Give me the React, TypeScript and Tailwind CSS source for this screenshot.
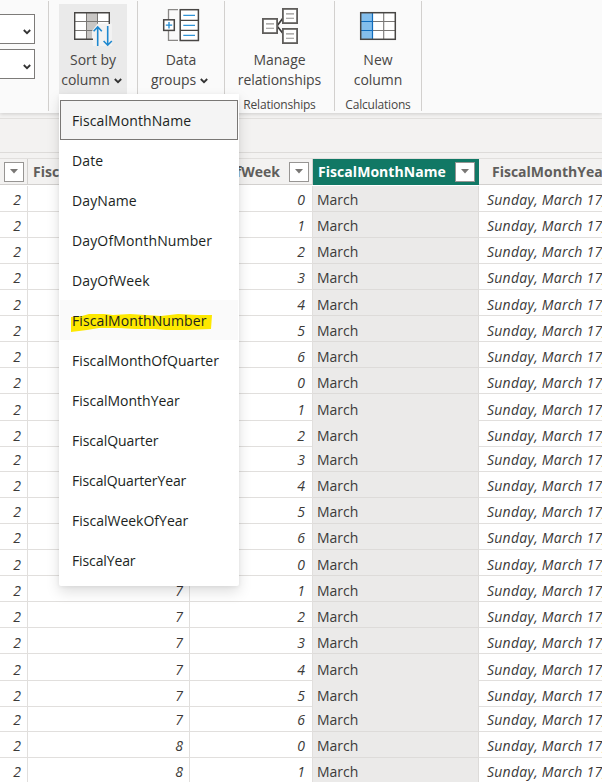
import React from "react";

const MENU_ITEMS = [
  { label: "FiscalMonthName", tracking: "tracking-[0.1px]" },
  { label: "Date", tracking: "tracking-[0.1px]" },
  { label: "DayName", tracking: "tracking-[0.1px]" },
  { label: "DayOfMonthNumber", tracking: "tracking-[0.14px]" },
  { label: "DayOfWeek", tracking: "tracking-[0.14px]" },
  { label: "FiscalMonthNumber", tracking: "tracking-[0.1px]" },
  { label: "FiscalMonthOfQuarter", tracking: "tracking-[0.06px]" },
  { label: "FiscalMonthYear", tracking: "tracking-[0px]" },
  { label: "FiscalQuarter", tracking: "tracking-[-0.04px]" },
  { label: "FiscalQuarterYear", tracking: "tracking-[-0.12px]" },
  { label: "FiscalWeekOfYear", tracking: "tracking-[0px]" },
  { label: "FiscalYear", tracking: "tracking-[-0.12px]" },
];

const ROWS = Array.from({ length: 23 }, (_, i) => ({
  quarter: 2,
  week: i < 21 ? 7 : 8,
  day: i % 7,
  month: "March",
  date: "Sunday, March 17,",
}));

// The grid's text baseline drifts down by a pixel every few rows and resets each ten.
const OFFSETS = ["pt-[4px]", "pt-[4px]", "pt-[4px]", "pt-[4px]", "pt-[5px]", "pt-[5px]", "pt-[5px]", "pt-[5px]", "pt-[6px]", "pt-[6px]"];

function Chevron({ className = "" }: { className?: string }) {
  return (
    <svg className={className} width="8" height="6" viewBox="0 0 8 6" fill="none" stroke="#333" strokeWidth="1.8">
      <path d="M0.8 1 L4 4.2 L7.2 1" />
    </svg>
  );
}

function SelectBox() {
  return (
    <div className="flex h-[30px] w-[35px] items-center justify-end border border-l-0 border-[#7d7b79] bg-white pt-[6px] pr-[3px]">
      <Chevron />
    </div>
  );
}

function SortIcon() {
  return (
    <svg width="40" height="38" viewBox="74 10 40 38" fill="none">
      <rect x="76" y="13" width="34" height="26" fill="#fff" />
      <rect x="87" y="13" width="12" height="26" fill="#c8c6c4" />
      <path d="M76 21.5H110M76 30.5H110M87.5 13V39M98.5 13V39" stroke="#797775" />
      <path d="M93 40V31L98.7 23.5H113V46H94z" fill="#f2f2f2" />
      <path d="M94 39.3H75.7V12.7H110.3V24" stroke="#484644" strokeWidth="1.4" />
      <path d="M98.7 46V27M94.6 31.2L98.7 27L102.8 31.2M108.7 26V45M104.6 41L108.7 45.2L112.8 41" stroke="#1e88cf" strokeWidth="1.6" />
    </svg>
  );
}

function GroupsIcon() {
  return (
    <svg width="40" height="38" viewBox="161 8 40 38" fill="none">
      <path d="M178 9.7H168.5V40.3H178" stroke="#8a8886" strokeWidth="1.3" />
      <rect x="180.2" y="9.7" width="18.2" height="30.8" fill="#fff" stroke="#484644" strokeWidth="1.5" />
      <path d="M180 20.4H198.5M180 30.4H198.5" stroke="#484644" strokeWidth="1.4" />
      <path d="M183.3 15.3H195M183.3 25.3H195M183.3 35.3H195" stroke="#2f93d6" strokeWidth="1.2" />
      <rect x="163.7" y="19.8" width="10.6" height="10.6" fill="#fff" stroke="#484644" strokeWidth="1.5" />
      <path d="M165.8 25.2H172.2M169 22V28.4" stroke="#1e88cf" strokeWidth="1.3" />
    </svg>
  );
}

function RelationIcon() {
  return (
    <svg width="40" height="38" viewBox="260 7 40 38" fill="none">
      <path d="M283 18L277 26L283 33.5" stroke="#3b3a39" strokeWidth="1.7" />
      <g fill="#fff" stroke="#605e5c" strokeWidth="1.8">
        <rect x="262.9" y="18.9" width="14.2" height="14.2" />
        <rect x="282.9" y="8.9" width="14.2" height="14.2" />
        <rect x="282.9" y="28.9" width="14.2" height="14.2" />
      </g>
      <path d="M266 23.9H274M266 28.2H274M286 13.9H294M286 18.2H294M286 33.9H294M286 38.2H294" stroke="#979593" strokeWidth="1.1" />
    </svg>
  );
}

function ColumnIcon() {
  return (
    <svg width="40" height="38" viewBox="358 10 40 38" fill="none">
      <rect x="361" y="13" width="34" height="26" fill="#fff" />
      <rect x="361" y="13" width="12" height="26" fill="#83beec" />
      <path d="M373 21.5H395M373 30.5H395M383.7 13V39" stroke="#797775" strokeWidth="1.1" />
      <path d="M361 21.5H373M361 30.5H373M372.5 13V39" stroke="#0f6cbd" strokeWidth="1.2" />
      <rect x="360.7" y="12.7" width="34.6" height="26.6" stroke="#484644" strokeWidth="1.5" />
    </svg>
  );
}

function Divider() {
  return <div className="mt-px h-[110px] w-px shrink-0 bg-[#d2d0ce]" />;
}

function RibbonButton({ icon, top, bottom, chevron, label }: { icon: React.ReactNode; top: string; bottom: string; chevron?: boolean; label?: string }) {
  return (
    <div className="flex flex-col items-center text-[14px] leading-5 whitespace-nowrap text-[#484644]">
      {icon}
      <span>{top}</span>
      <span className="flex items-center tracking-[-0.08px]">
        {bottom}
        {chevron && <Chevron className="mt-[1px] mr-[3px] ml-1" />}
      </span>
      {label && <span className="mt-[5px] text-[12px] tracking-[-0.2px]">{label}</span>}
    </div>
  );
}

function FilterButton() {
  return (
    <span className="flex h-5 w-5 shrink-0 items-center justify-center border border-[#979593] bg-white">
      <svg width="8" height="5" viewBox="0 0 8 5">
        <path d="M0 0H8L4 4.5z" fill="#797775" />
      </svg>
    </span>
  );
}

const COLUMNS = "grid grid-cols-[28px_162px_123px_166px_123px]";

export default function App() {
  return (
    <div className="relative flex h-[782px] w-[602px] flex-col overflow-hidden bg-white font-['Open_Sans','Noto_Sans',sans-serif] font-normal text-[#3b3a39]">
      <div className="z-10 flex h-[113px] shrink-0 bg-[#fafafa] shadow-[0_1px_4px_rgba(0,0,0,0.16)]">
        <div className="flex w-12 flex-col gap-[5px] pt-[14px]">
          <SelectBox />
          <SelectBox />
        </div>
        <Divider />
        <div className="mt-1 ml-[10px] h-[90px] w-[68px] bg-[#eaeaea] pt-[6px]">
          <RibbonButton icon={<div className="h-10"><SortIcon /></div>} top="Sort by" bottom="column" chevron />
        </div>
        <div className="w-[10px]" />
        <Divider />
        <div className="w-[86px] pt-2">
          <RibbonButton icon={<div className="h-[42px]"><GroupsIcon /></div>} top="Data" bottom="groups" chevron />
        </div>
        <Divider />
        <div className="w-[109px] pt-[7px]">
          <RibbonButton icon={<div className="h-[43px]"><RelationIcon /></div>} top="Manage" bottom="relationships" label="Relationships" />
        </div>
        <Divider />
        <div className="w-[86px] pt-[10px]">
          <RibbonButton icon={<div className="h-10"><ColumnIcon /></div>} top="New" bottom="column" label="Calculations" />
        </div>
        <Divider />
      </div>

      <div className="h-[40px] shrink-0 border-b border-[#dddbd9] bg-[#f3f2f1] pt-[5px]">
        <div className="h-px bg-[#e1dfdd]" />
      </div>
      <div className="h-[6px] shrink-0 border-b border-[#e1dfdd] bg-[#f3f2f1]" />

      <div className={`${COLUMNS} h-[26px] shrink-0 bg-[#f3f2f1] text-[14px] font-bold whitespace-nowrap text-[#605e5c]`}>
        <div className="flex items-center justify-end border-r border-b border-[#d2d0ce] pr-[3px]"><FilterButton /></div>
        <div className="flex items-center overflow-hidden border-r border-b border-[#d2d0ce] pl-[5px]">FiscalWeekOfYear</div>
        <div className="flex items-center justify-end gap-[9px] border-r border-b border-[#d2d0ce] pr-[3px]">DayOfWeek<FilterButton /></div>
        <div className="flex items-center justify-between border-b border-[#117865] bg-[#117865] pr-1 pl-[5px] tracking-[0.05px] text-white">FiscalMonthName<FilterButton /></div>
        <div className="flex items-center overflow-hidden border-b border-[#d2d0ce] pl-[13px]">FiscalMonthYear</div>
      </div>

      <div className="text-[14px] leading-5 whitespace-nowrap">
        {ROWS.map((row, i) => (
          <div key={i} className={`${COLUMNS} h-[26px] ${i === 0 ? "mt-[1px]" : ""}`}>
            <div className={`border-r border-b border-[#e1dfdd] pr-[6px] text-right italic ${OFFSETS[i % 10]}`}>{row.quarter}</div>
            <div className={`border-r border-b border-[#e1dfdd] pr-[6px] text-right italic ${OFFSETS[i % 10]}`}>{row.week}</div>
            <div className={`border-r border-b border-[#e1dfdd] pr-[7px] text-right italic ${OFFSETS[i % 10]}`}>{row.day}</div>
            <div className={`border-r border-b border-[#dddbd9] bg-[#ebeae9] pl-1 ${OFFSETS[i % 10]}`}>{row.month}</div>
            <div className={`overflow-hidden border-b border-[#e1dfdd] pl-2 tracking-[0.25px] italic ${OFFSETS[i % 10]}`}>{row.date}</div>
          </div>
        ))}
      </div>

      <div className="absolute top-[94px] left-[59px] z-20 w-[180px] rounded-b-[2px] bg-white px-px py-[6px] text-[14px] text-[#201f1e] shadow-[0_6px_14px_rgba(0,0,0,0.13),0_1px_4px_rgba(0,0,0,0.06)]">
        {MENU_ITEMS.map((item, i) => (
          <div
            key={item.label}
            className={`relative flex h-10 items-center pl-3 ${i === 0 ? "bg-[#f4f4f4] outline outline-1 -outline-offset-1 outline-[#797775]" : ""} ${i === 5 ? "bg-[#fafafa]" : ""}`}
          >
            {i === 5 && (
              <svg className="absolute top-[13px] left-[10px]" width="144" height="20" viewBox="0 0 144 20">
                <path d="M1 4L12 3L19 1H34L43 2L60 1L91 3L108 1L128 2L142 2L141 16L114 17H96L85 16H65L48 15H29L17 17L1 19z" fill="#fde800" />
              </svg>
            )}
            <span className={`relative ${item.tracking}`}>{item.label}</span>
          </div>
        ))}
      </div>
    </div>
  );
}
